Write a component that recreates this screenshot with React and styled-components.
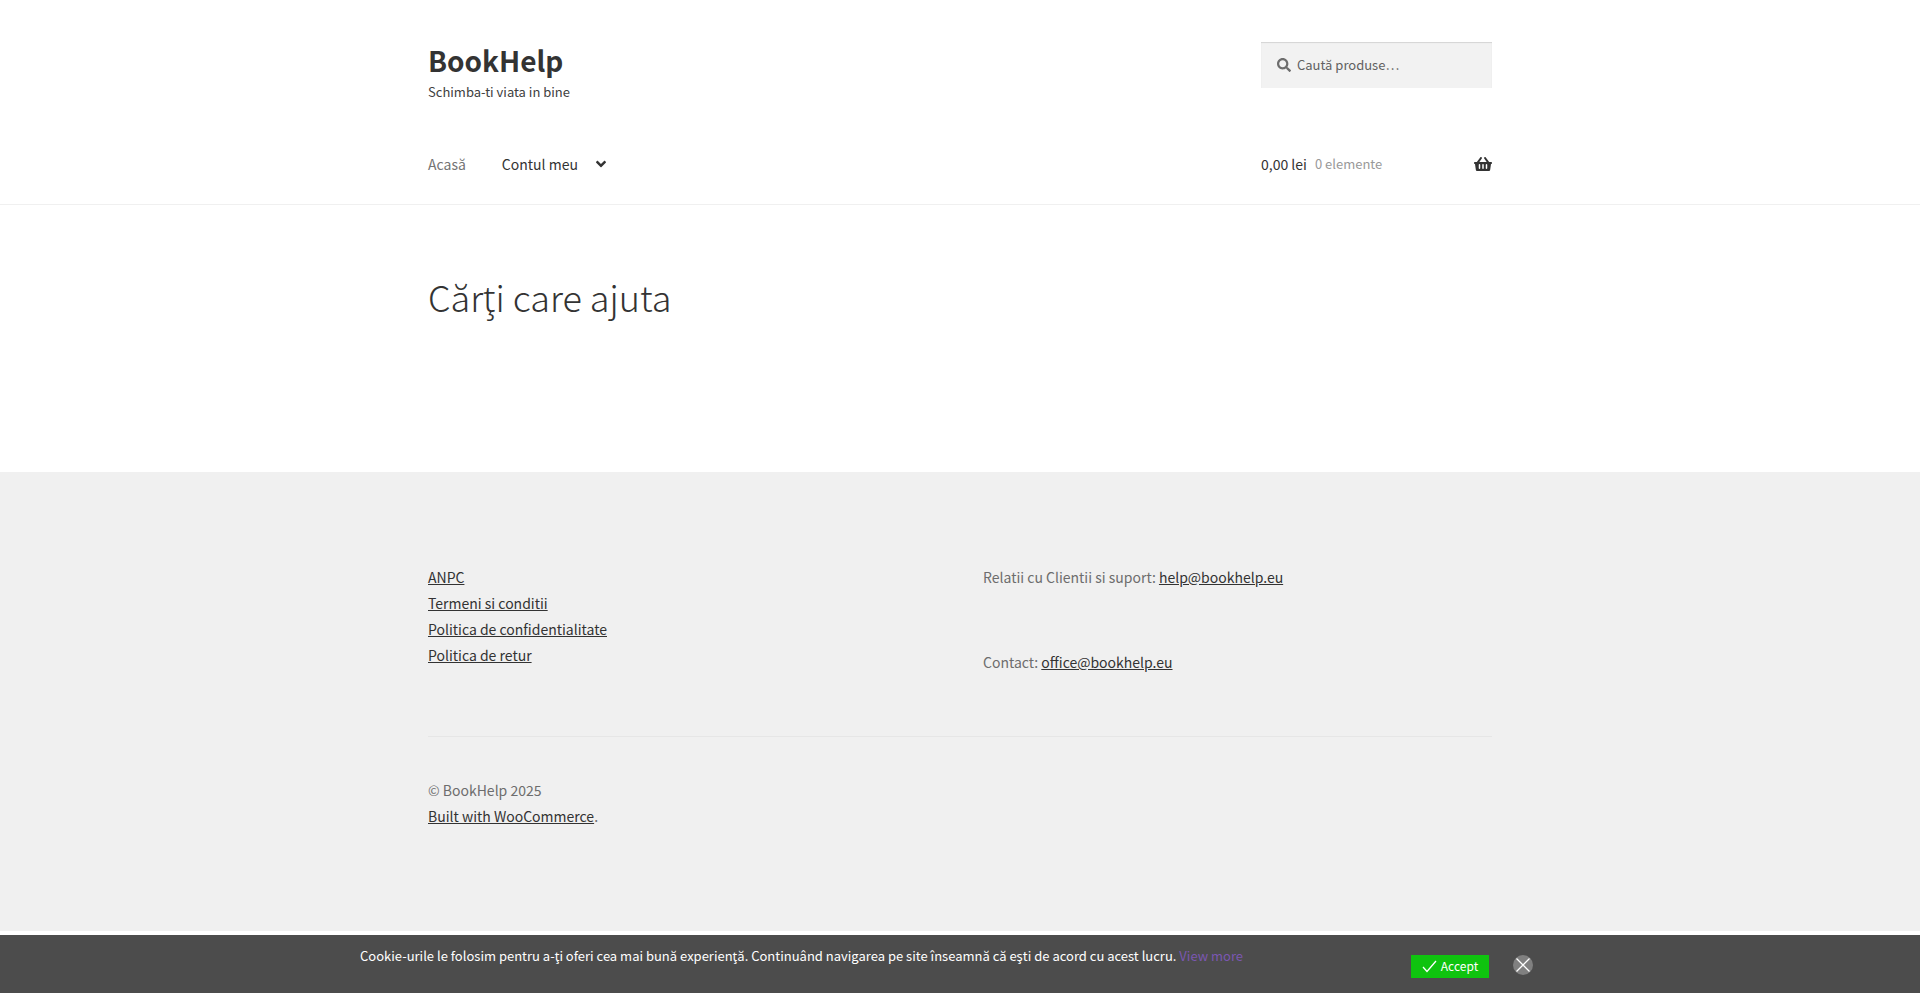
import React from 'react'
import { useState } from 'react'
import styled, { createGlobalStyle } from 'styled-components'
import { FaAngleDown, FaSearch, FaShoppingBasket } from 'react-icons/fa'

const GlobalStyle = createGlobalStyle`
    * {
        box-sizing: border-box;
    }

    body {
        margin: 0;
        background-color: white;
        color: #6d6d6d;
        font-family: "Noto Sans CJK SC", "Noto Sans", sans-serif;
        font-size: 14px;
        line-height: 26px;
    }

    button, input {
        font-family: inherit;
    }
`

const Container = styled.div`
    max-width: 1064px;
    margin: 0 auto;
`

const Header = styled.header`
    padding-top: 42px;
    border-bottom: 1px solid #f0f0f0;
`

const Row = styled.div`
    display: flex;
    justify-content: space-between;
`

const Branding = styled.div`
    padding-bottom: 40px;
`

const SiteTitle = styled.a`
    display: block;
    color: #333333;
    font-size: 28px;
    font-weight: 700;
    line-height: 36px;
    text-decoration: none;
`

const Tagline = styled.p`
    margin: 0;
    color: #404040;
    font-size: 13px;
    line-height: 28px;
`

const SearchForm = styled.form`
    display: grid;
    align-items: center;
    width: 231px;
    height: 46px;
    color: #6d6d6d;

    & > * {
        grid-area: 1 / 1;
    }

    & > svg {
        margin-left: 16px;
        pointer-events: none;
        z-index: 1;
    }
`

const SearchInput = styled.input`
    width: 100%;
    height: 46px;
    padding: 0 16px 2px 36px;
    border: 0;
    border-radius: 0;
    background-color: #f2f2f2;
    box-shadow: inset 0 1px 1px rgba(0, 0, 0, 0.125);
    color: #43454b;
    font-size: 13px;

    &::placeholder {
        color: #616161;
        opacity: 1;
    }
`

const Menu = styled.nav`
    display: flex;
    gap: 36px;
    height: 58px;
`

const MenuLink = styled.a`
    display: flex;
    align-items: center;
    gap: 15px;
    height: 36px;
    color: ${props => props.$current ? '#747474' : '#333333'};
    text-decoration: none;
`

const CartLink = styled.a`
    display: flex;
    align-items: center;
    gap: 8px;
    width: 231px;
    height: 36px;
    color: #333333;
    text-decoration: none;

    & > svg {
        margin-left: auto;
    }
`

const Count = styled.span`
    color: #999999;
    font-size: 13px;
`

const Main = styled.main`
    padding: 63px 0 148px;
`

const PageTitle = styled.h1`
    margin: 0;
    color: #333333;
    font-size: 36px;
    font-weight: 300;
    line-height: 56px;
`

const Footer = styled.footer`
    padding: 92px 0 102px;
    background-color: #f0f0f0;
`

const Widgets = styled.div`
    display: grid;
    grid-template-columns: 1fr 1fr;
    gap: 46px;
    padding-bottom: 61px;
`

const Widget = styled.div`
    display: flex;
    flex-direction: column;
    align-items: flex-start;
    gap: ${props => props.$gap || 0}px;
`

const Text = styled.p`
    margin: 0;
`

const Link = styled.a`
    color: #333333;
    text-decoration: underline;
`

const SiteInfo = styled.div`
    padding-top: 40px;
    border-top: 1px solid #e6e6e6;
`

const CookieBar = styled.div`
    position: fixed;
    right: 0;
    bottom: 0;
    left: 0;
    height: 58px;
    background-color: #4c4c4c;
    color: white;
    font-size: 13px;
    line-height: 20px;
`

const CookieInner = styled.div`
    display: flex;
    max-width: 1200px;
    margin: 0 auto;
    padding-top: 11px;
`

const CookieText = styled.p`
    flex: 1;
    margin: 0;
`

const MoreLink = styled.a`
    color: #7b57b2;
    text-decoration: none;
`

const Actions = styled.div`
    display: flex;
    align-items: flex-start;
    gap: 24px;
    padding-top: 9px;
    margin-right: 27px;
`

const AcceptButton = styled.button`
    display: flex;
    align-items: center;
    justify-content: center;
    gap: 4px;
    width: 78px;
    height: 23px;
    padding: 0 0 2px;
    border: 0;
    background-color: #0fc30f;
    color: white;
    font-size: 12px;
    cursor: pointer;
`

const CloseButton = styled.button`
    display: flex;
    width: 20px;
    height: 20px;
    padding: 0;
    border: 0;
    border-radius: 50%;
    background-color: #808080;
    cursor: pointer;
`

function CookieNotice() {
    const [open, setOpen] = useState(true)

    if (!open) return null

    return (
        <CookieBar>
            <CookieInner>
                <CookieText>
                    Cookie-urile le folosim pentru a-ţi oferi cea mai bună experienţă. Continuând navigarea pe site înseamnă că eşti de acord cu acest lucru. <MoreLink href='#more'>View more</MoreLink>
                </CookieText>
                <Actions>
                    <AcceptButton type='button' onClick={() => setOpen(false)}>
                        <svg width='15' height='14' viewBox='0 0 15 14' fill='none' stroke='currentColor' strokeWidth='1.3'>
                            <path d='M1 8l4 4.5L14 2' />
                        </svg>
                        Accept
                    </AcceptButton>
                    <CloseButton type='button' aria-label='Close' onClick={() => setOpen(false)}>
                        <svg width='20' height='20' viewBox='0 0 20 20' stroke='white' strokeWidth='1.3'>
                            <path d='M3.5 3.5l13 13M16.5 3.5l-13 13' />
                        </svg>
                    </CloseButton>
                </Actions>
            </CookieInner>
        </CookieBar>
    )
}

export default function App() {
    return (
        <>
            <GlobalStyle />
            <Header>
                <Container>
                    <Row>
                        <Branding>
                            <SiteTitle href='#home'>BookHelp</SiteTitle>
                            <Tagline>Schimba-ti viata in bine</Tagline>
                        </Branding>
                        <SearchForm role='search'>
                            <FaSearch size={14} />
                            <SearchInput type='search' aria-label='Caută produse' placeholder='Caută produse…' />
                        </SearchForm>
                    </Row>
                    <Row>
                        <Menu>
                            <MenuLink href='#home' $current>Acasă</MenuLink>
                            <MenuLink href='#account'>
                                Contul meu
                                <FaAngleDown size={16} />
                            </MenuLink>
                        </Menu>
                        <CartLink href='#cart'>
                            0,00 lei
                            <Count>0 elemente</Count>
                            <FaShoppingBasket size={18} />
                        </CartLink>
                    </Row>
                </Container>
            </Header>

            <Main>
                <Container>
                    <PageTitle>Cărţi care ajuta</PageTitle>
                </Container>
            </Main>

            <Footer>
                <Container>
                    <Widgets>
                        <Widget>
                            <Link href='#anpc'>ANPC</Link>
                            <Link href='#termeni'>Termeni si conditii</Link>
                            <Link href='#confidentialitate'>Politica de confidentialitate</Link>
                            <Link href='#retur'>Politica de retur</Link>
                        </Widget>
                        <Widget $gap={59}>
                            <Text>Relatii cu Clientii si suport: <Link href='mailto:help@bookhelp.eu'>help@bookhelp.eu</Link></Text>
                            <Text>Contact: <Link href='mailto:office@bookhelp.eu'>office@bookhelp.eu</Link></Text>
                        </Widget>
                    </Widgets>
                    <SiteInfo>
                        <Text>© BookHelp 2025</Text>
                        <Text><Link href='#woocommerce'>Built with WooCommerce</Link>.</Text>
                    </SiteInfo>
                </Container>
            </Footer>
            <CookieNotice />
        </>
    )
}
